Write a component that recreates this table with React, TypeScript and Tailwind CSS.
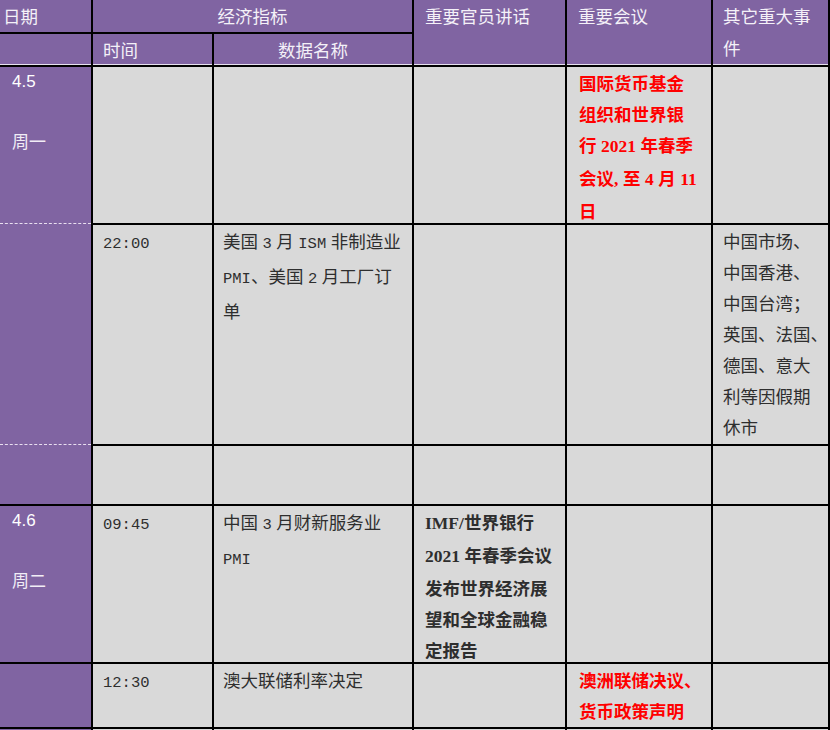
import React from "react";

const MONO = "[font-family:'Liberation_Mono',monospace] text-[15.5px]";
const SERIFB = "[font-family:'Liberation_Serif',serif] font-bold";

function Rich({ s, latin }: { s: string; latin: string }) {
  const parts = s.split(/( |[\x21-\x7E]+)/).filter((p) => p !== "");
  return (
    <>
      {parts.map((p, i) =>
        p === " " ? (
          <span key={i} className="inline-block w-[4.5px]" />
        ) : /^[\x21-\x7E]+$/.test(p) ? (
          <span key={i} className={latin}>
            {p}
          </span>
        ) : (
          <span key={i}>{p}</span>
        )
      )}
    </>
  );
}

function Lines({ lines, latin }: { lines: string[]; latin: string }) {
  return (
    <>
      {lines.map((l, i) => (
        <div key={i} className="whitespace-nowrap">
          <Rich s={l} latin={latin} />
        </div>
      ))}
    </>
  );
}

const H = "bg-[#8064a2] text-[#f4f1f8] text-[17.5px] [font-family:'Noto_Sans_CJK_SC',sans-serif]";
const C = "bg-[#d9d9d9] text-[#2e2e2e] text-[17.5px] leading-[31px] [font-family:'Noto_Sans_CJK_SC',sans-serif]";
const D = "bg-[#8064a2] text-white";

export default function App() {
  return (
    <div className="w-[830px] h-[730px] overflow-hidden bg-black">
      <div className="grid grid-cols-[91px_119px_198px_151px_144px_115px] grid-rows-[32px_31px_156px_219px_58px_156px_63px_40px] gap-[2px] pr-[2px] bg-black">
        {/* header row 1 */}
        <div className={`${H} leading-[32px] pl-[3px]`}>日期</div>
        <div className={`${H} col-span-2 leading-[32px] text-center`}>经济指标</div>
        <div className={`${H} row-span-2 leading-[32px] pl-[11px] border-b border-[#e6e0ee]`}>重要官员讲话</div>
        <div className={`${H} row-span-2 leading-[32px] pl-[11px] border-b border-[#e6e0ee]`}>重要会议</div>
        <div className={`${H} row-span-2 leading-[32px] pl-[10px] border-b border-[#e6e0ee]`}>
          其它重大事
          <br />件
        </div>
        {/* header row 2 */}
        <div className={`${H} border-b border-[#e6e0ee]`} />
        <div className={`${H} leading-[31px] pl-[10px] border-b border-[#e6e0ee]`}>时间</div>
        <div className={`${H} leading-[31px] text-center border-b border-[#e6e0ee]`}>数据名称</div>

        {/* 4.5 date cell spanning three rows */}
        <div className={`${D} row-span-3 flex flex-col`}>
          <div className="h-[156px] pl-[12px] leading-[29.5px]">
            <div className="[font-family:'Liberation_Sans',sans-serif] text-[17px]">4.5</div>
            <div>&nbsp;</div>
            <div className="[font-family:'Noto_Sans_CJK_SC',sans-serif] text-[17px] text-[#f1edf6]">周一</div>
          </div>
          <div className="h-[221px] border-t border-dashed border-[#e9dff0]" />
          <div className="h-[60px] border-t border-dashed border-[#e9dff0]" />
        </div>

        {/* row 1 */}
        <div className={C} />
        <div className={C} />
        <div className={C} />
        <div className={`${C} pl-[12px] font-bold text-[#ff0000]`}>
          <Lines
            latin={SERIFB}
            lines={["国际货币基金", "组织和世界银", "行 2021 年春季", "会议, 至 4 月 11", "日"]}
          />
        </div>
        <div className={C} />

        {/* row 2 */}
        <div className={`${C} pl-[10px]`}>
          <Lines latin={MONO} lines={["22:00"]} />
        </div>
        <div className={`${C} pl-[9px]`}>
          <Lines latin={MONO} lines={["美国 3 月 ISM 非制造业", "PMI、美国 2 月工厂订", "单"]} />
        </div>
        <div className={C} />
        <div className={C} />
        <div className={`${C} pl-[10px]`}>
          <Lines
            latin={MONO}
            lines={["中国市场、", "中国香港、", "中国台湾；", "英国、法国、", "德国、意大", "利等因假期", "休市"]}
          />
        </div>

        {/* row 3 */}
        <div className={C} />
        <div className={C} />
        <div className={C} />
        <div className={C} />
        <div className={C} />

        {/* row 4 : 4.6 */}
        <div className={`${D} pl-[12px] leading-[29.5px]`}>
          <div className="[font-family:'Liberation_Sans',sans-serif] text-[17px]">4.6</div>
          <div>&nbsp;</div>
          <div className="[font-family:'Noto_Sans_CJK_SC',sans-serif] text-[17px] text-[#f1edf6]">周二</div>
        </div>
        <div className={`${C} pl-[10px]`}>
          <Lines latin={MONO} lines={["09:45"]} />
        </div>
        <div className={`${C} pl-[9px]`}>
          <Lines latin={MONO} lines={["中国 3 月财新服务业", "PMI"]} />
        </div>
        <div className={`${C} pl-[11px] font-bold text-[#1a1a1a]`}>
          <Lines
            latin={SERIFB}
            lines={["IMF/世界银行", "2021 年春季会议", "发布世界经济展", "望和全球金融稳", "定报告"]}
          />
        </div>
        <div className={C} />
        <div className={C} />

        {/* row 5 */}
        <div className={D} />
        <div className={`${C} pl-[10px]`}>
          <Lines latin={MONO} lines={["12:30"]} />
        </div>
        <div className={`${C} pl-[9px]`}>
          <Lines latin={MONO} lines={["澳大联储利率决定"]} />
        </div>
        <div className={C} />
        <div className={`${C} pl-[12px] font-bold text-[#ff0000]`}>
          <Lines latin={SERIFB} lines={["澳洲联储决议、", "货币政策声明"]} />
        </div>
        <div className={C} />

        {/* row 6 (cut off) */}
        <div className={D} />
        <div className={C} />
        <div className={C} />
        <div className={C} />
        <div className={C} />
        <div className={C} />
      </div>
    </div>
  );
}
